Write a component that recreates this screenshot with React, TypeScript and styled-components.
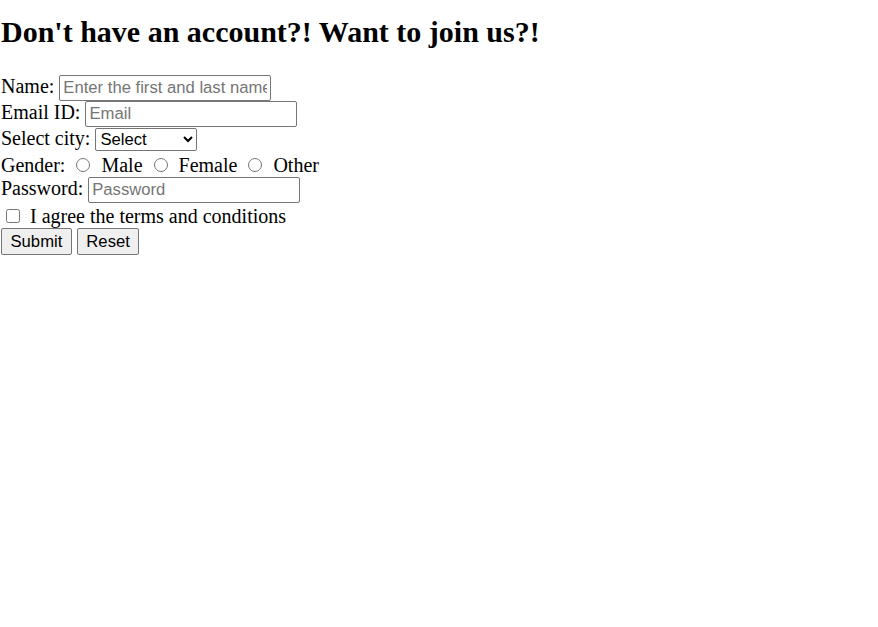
import styled, { createGlobalStyle } from "styled-components";

const GlobalStyle = createGlobalStyle`
  body {
    margin: 0;
    padding-left: 1px;
    background: #fff;
    color: #000;
    font-family: "Liberation Serif", "Times New Roman", serif;
    font-size: 20px;
  }
`;

export default function App() {
  return (
    <>
      <GlobalStyle />
      <STitle>Don't have an account?! Want to join us?!</STitle>
      <form>
        <label>Name: </label>
        <STextInput type="text" placeholder="Enter the first and last name" />
        <br />
        <label>Email ID: </label>
        <STextInput type="email" placeholder="Email" />
        <br />
        <label>Select city: </label>
        <SSelect defaultValue="">
          <option value="">Select</option>
          <option>Delhi</option>
          <option>Mumbai</option>
          <option>Chennai</option>
        </SSelect>
        <br />
        Gender: <SRadio type="radio" name="gender" /> Male{" "}
        <SRadio type="radio" name="gender" /> Female{" "}
        <SRadio type="radio" name="gender" /> Other
        <br />
        <label>Password: </label>
        <STextInput type="password" placeholder="Password" />
        <br />
        <SCheck type="checkbox" /> I agree the terms and conditions
        <br />
        <SButton type="submit" onClick={(e) => e.preventDefault()}>
          Submit
        </SButton>{" "}
        <SButton type="reset">Reset</SButton>
      </form>
    </>
  );
}

const STitle = styled.h1`
  font-size: 30px;
  font-weight: 700;
  margin: 15px 0 26px;
`;

const STextInput = styled.input`
  box-sizing: border-box;
  width: 212px;
  height: 26px;
  padding: 1px 3px;
  font-family: "Liberation Sans", Arial, sans-serif;
  font-size: 16.67px;
  border: 1px solid #767676;
  border-radius: 2px;

  &::placeholder {
    color: #757575;
  }
`;

const SSelect = styled.select`
  box-sizing: border-box;
  width: 102px;
  height: 23px;
  font-family: "Liberation Sans", Arial, sans-serif;
  font-size: 16.67px;
  border: 1px solid #767676;
  border-radius: 2px;
  background: #fff;
  color: #000;
`;

const SRadio = styled.input`
  width: 14px;
  height: 14px;
  margin: 7px 6px 0 6px;
`;

const SCheck = styled.input`
  width: 14px;
  height: 14px;
  margin: 6px 5px 3px 5px;
`;

const SButton = styled.button`
  box-sizing: border-box;
  height: 27px;
  padding: 1px 8.5px;
  font-family: "Liberation Sans", Arial, sans-serif;
  font-size: 16.67px;
  color: #000;
  background: #efefef;
  border: 1px solid #767676;
  border-radius: 2px;
`;
